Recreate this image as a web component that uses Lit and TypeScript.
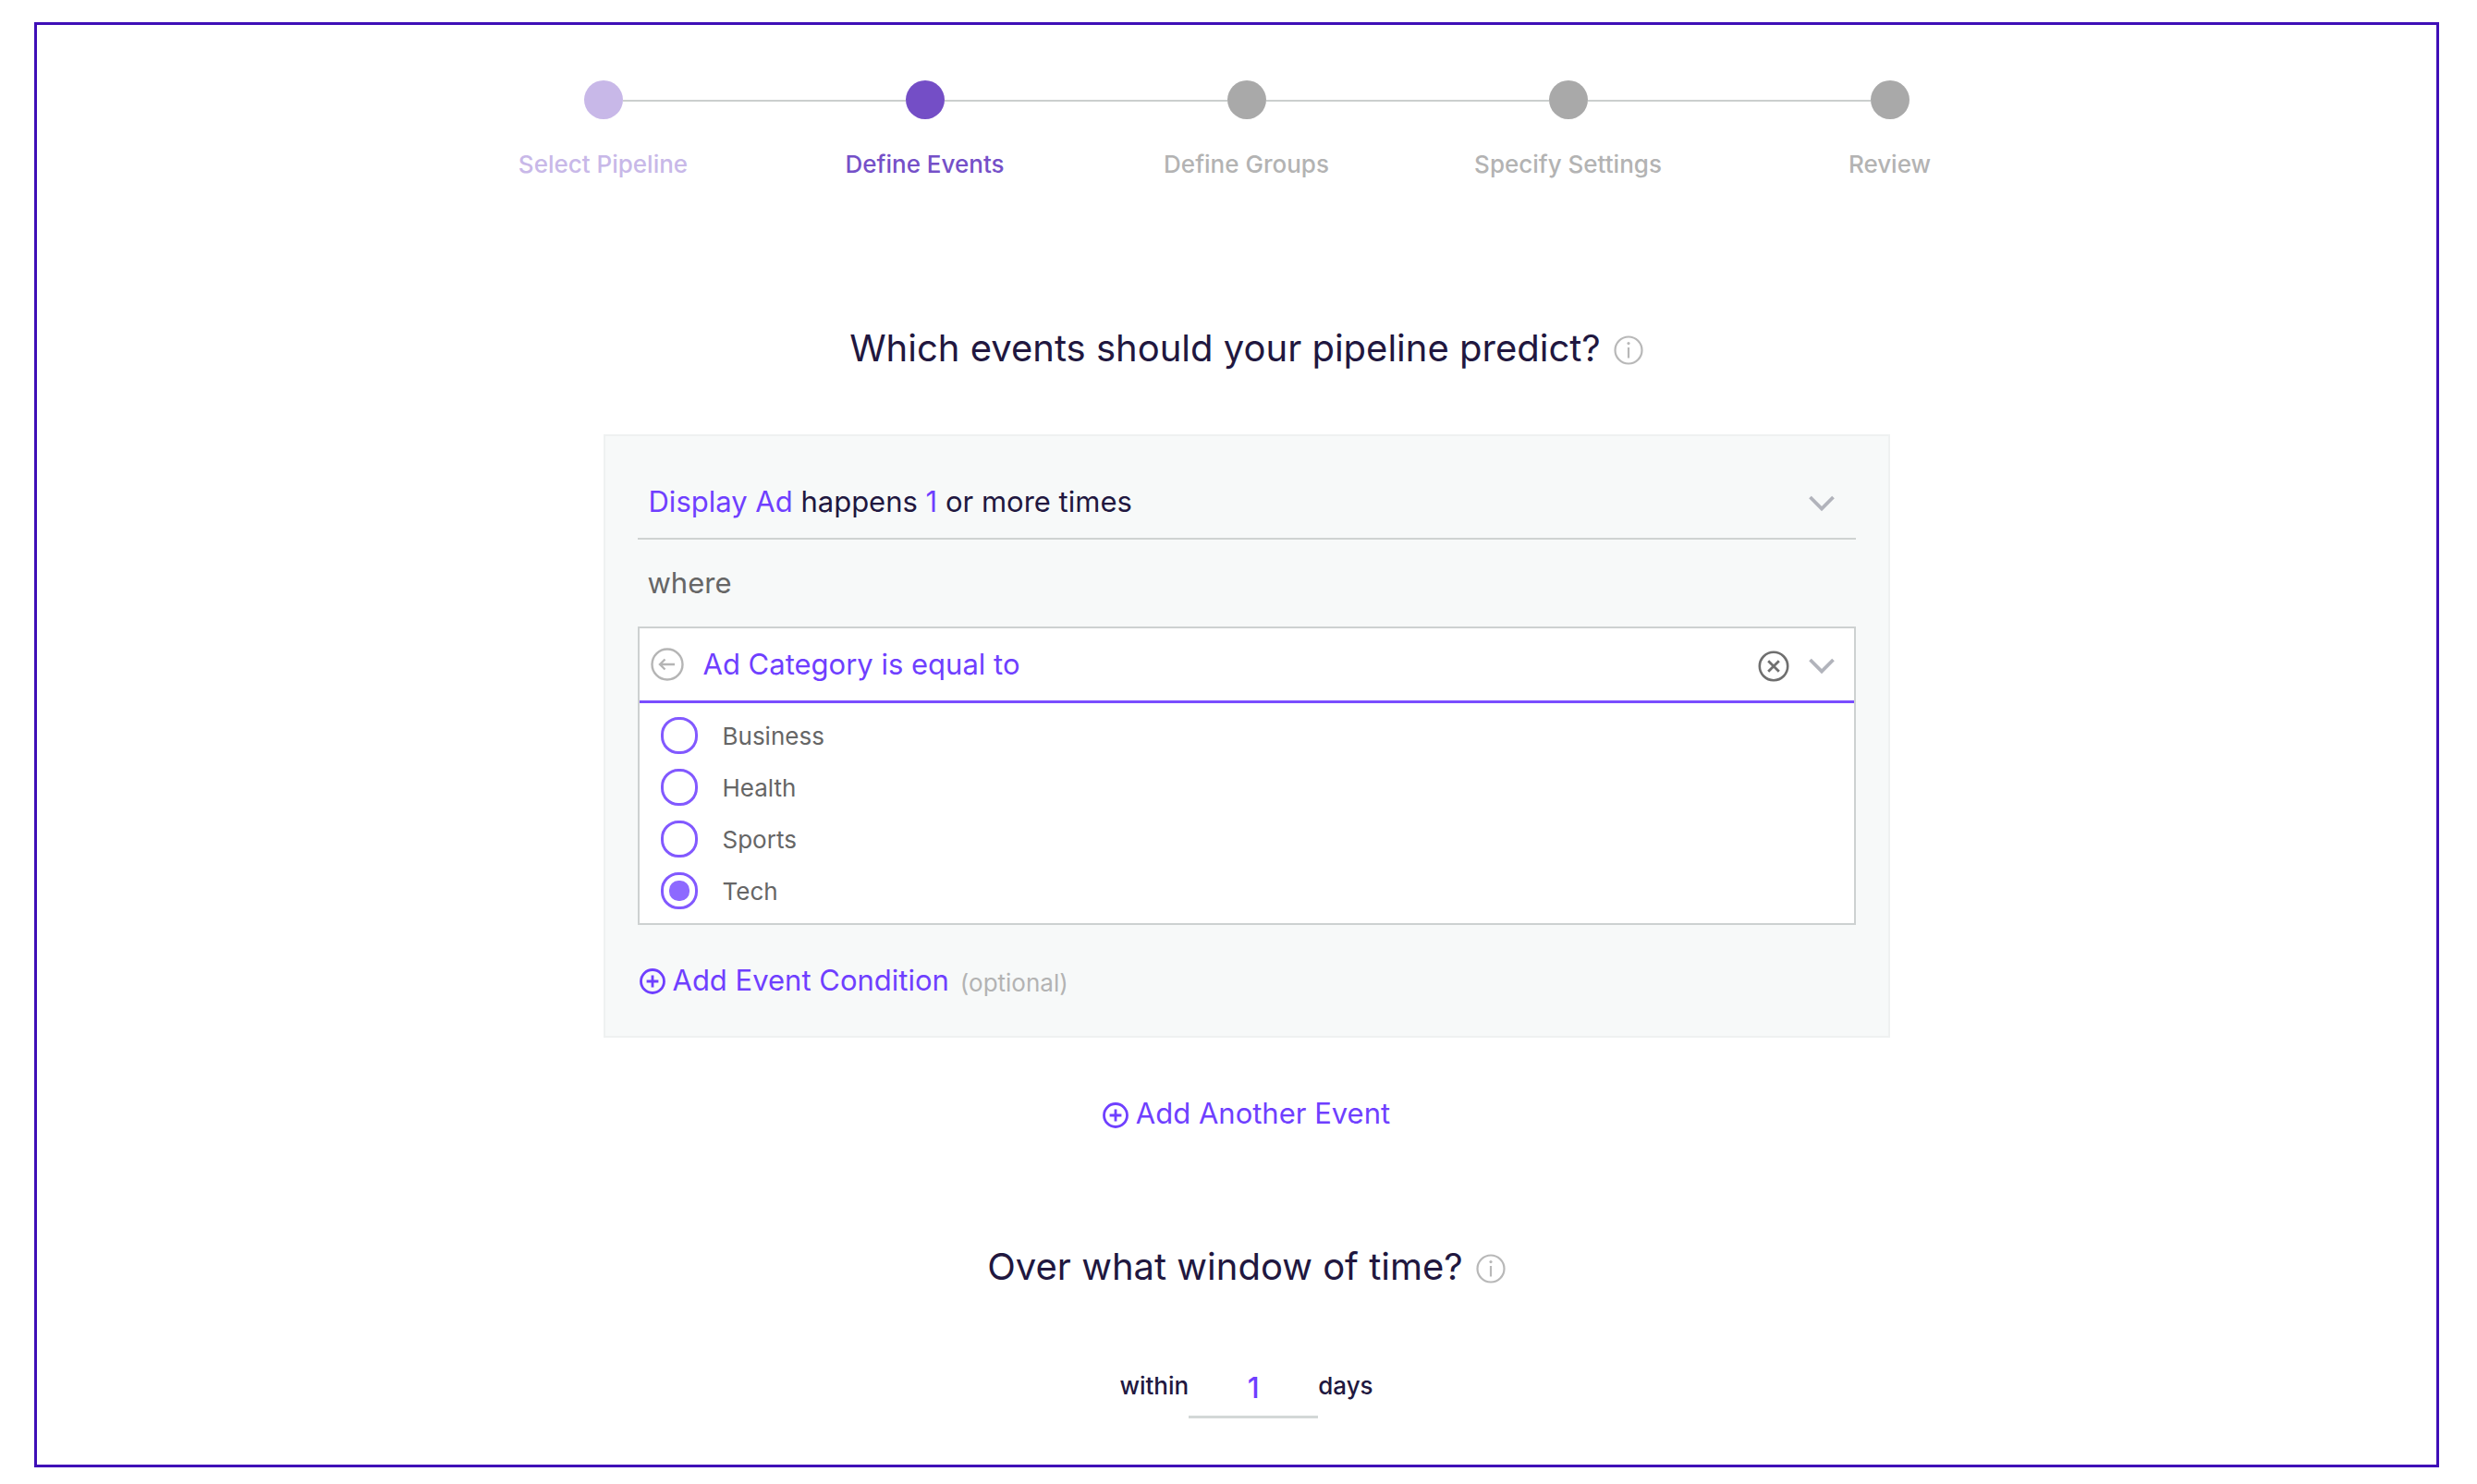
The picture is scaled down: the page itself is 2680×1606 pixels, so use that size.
import { LitElement, html, css, svg } from "lit";
import { customElement, state } from "lit/decorators.js";
import { classMap } from "lit/directives/class-map.js";

const STEPS = [
  { label: "Select Pipeline", status: "done" },
  { label: "Define Events", status: "current" },
  { label: "Define Groups", status: "upcoming" },
  { label: "Specify Settings", status: "upcoming" },
  { label: "Review", status: "upcoming" },
];

const CATEGORIES = ["Business", "Health", "Sports", "Tech"];

const infoIcon = html`<svg class="info-icon" viewBox="0 0 32 32" aria-hidden="true">
  ${svg`<circle cx="16" cy="16" r="14.5" fill="none" stroke="currentColor" stroke-width="2.2"/>
  <path d="M16 13V24.5" fill="none" stroke="currentColor" stroke-width="2.2"/>
  <circle cx="16" cy="8.6" r="1.6" fill="currentColor"/>`}
</svg>`;

const chevronIcon = html`<svg class="chevron-icon" viewBox="0 0 28 28" aria-hidden="true">
  ${svg`<path d="M1.5 9L14 21.5L26.5 9" fill="none" stroke="currentColor" stroke-width="3.8"/>`}
</svg>`;

const backIcon = html`<svg class="back-icon" viewBox="0 0 36 36" aria-hidden="true">
  ${svg`<circle cx="18" cy="18" r="16.5" fill="none" stroke="currentColor" stroke-width="2.4"/>
  <path d="M26 18H10.5M15.5 12.5L10 18L15.5 23.5" fill="none" stroke="currentColor" stroke-width="2.4"/>`}
</svg>`;

const clearIcon = html`<svg class="clear-icon" viewBox="0 0 34 34" aria-hidden="true">
  ${svg`<circle cx="17" cy="17" r="15.2" fill="none" stroke="currentColor" stroke-width="2.6"/>
  <path d="M11.2 11.2L22.8 22.8M22.8 11.2L11.2 22.8" fill="none" stroke="currentColor" stroke-width="2.8"/>`}
</svg>`;

const plusIcon = html`<svg class="plus-icon" viewBox="0 0 28 28" aria-hidden="true">
  ${svg`<circle cx="14" cy="14" r="12.5" fill="none" stroke="currentColor" stroke-width="2.8"/>
  <path d="M14 7.6V20.4M7.6 14H20.4" fill="none" stroke="currentColor" stroke-width="2.8"/>`}
</svg>`;

@customElement("app-root")
export class AppRoot extends LitElement {
  @state() private category = "Tech";

  static styles = css`
    :host {
      display: block;
      box-sizing: border-box;
      min-height: 100vh;
      padding: 24px 41px 18px 37px;
      background: #fff;
      color: #21173f;
      font-family: Inter, "Liberation Sans", sans-serif;
      font-size: 31px;
      font-weight: 420;
      line-height: 38px;
    }
    * {
      box-sizing: border-box;
    }
    button,
    input {
      margin: 0;
      padding: 0;
      border: 0;
      background: none;
      color: inherit;
      font: inherit;
    }
    button {
      display: inline-flex;
      align-items: center;
      cursor: pointer;
    }
    svg {
      display: block;
      flex: none;
    }
    .frame {
      display: flex;
      flex-direction: column;
      align-items: center;
      padding: 60px 0 50px 21px;
      border: 3px solid #3f0fb7;
    }
    .steps {
      display: grid;
      grid-template-columns: repeat(5, 1fr);
      width: 100%;
      max-width: 1740px;
      margin: 0 0 159px;
      padding: 0;
      list-style: none;
    }
    .step {
      display: flex;
      flex-direction: column;
      gap: 33px;
      text-align: center;
      font-size: 26px;
      font-weight: 450;
      line-height: 32px;
      color: #b3b3b3;
    }
    .marker {
      display: flex;
      align-items: center;
    }
    .marker::before,
    .marker::after {
      content: "";
      flex: 1;
      height: 2px;
      margin-top: 2px;
      background: #cbcfce;
    }
    .step:first-child .marker::before,
    .step:last-child .marker::after {
      background: none;
    }
    .dot {
      width: 42px;
      height: 42px;
      border-radius: 50%;
      background: #a9a9a9;
    }
    .done {
      color: #c8b8e8;
    }
    .done .dot {
      background: #c8b8e8;
    }
    .current {
      color: #7550c8;
    }
    .current .dot {
      background: #744ec6;
    }
    .question {
      display: flex;
      align-items: center;
      gap: 14px;
    }
    h2 {
      margin: 0;
      font-size: 40px;
      line-height: 48px;
      font-weight: inherit;
    }
    .info {
      padding-top: 4px;
      color: #b8b8b8;
    }
    .info-icon {
      width: 32px;
      height: 32px;
    }
    .panel {
      width: 100%;
      max-width: 1392px;
      margin: 69px 0 63px;
      padding: 32px 35px 41px;
      border: 2px solid #eff1f1;
      background: #f7f9f9;
    }
    .event {
      justify-content: space-between;
      width: 100%;
      padding: 20px 23px 20px 12px;
      border-bottom: 2px solid #cfd3d2;
      text-align: left;
    }
    .accent {
      color: #6f3fff;
    }
    .chevron-icon {
      width: 28px;
      height: 28px;
      color: #b1b3bb;
    }
    .where {
      margin: 28px 0;
      padding-left: 11px;
      color: #666;
    }
    .condition {
      margin: 0 0 40px;
      border: 2px solid #cdd1d1;
      background: #fff;
    }
    .condition-head {
      display: flex;
      align-items: center;
      gap: 21px;
      padding: 20px 21px 20px 12px;
      border-bottom: 3px solid #7a4dff;
    }
    .condition-text {
      flex: 1;
      color: #6f3fff;
    }
    .back {
      color: #b5b5b5;
    }
    .back-icon {
      width: 36px;
      height: 36px;
    }
    .clear {
      padding-top: 4px;
      color: #6f6f6f;
    }
    .clear-icon {
      width: 34px;
      height: 34px;
    }
    .options {
      display: flex;
      flex-direction: column;
      min-width: 0;
      margin: 0;
      padding: 7px 23px;
      border: 0;
    }
    .option {
      display: flex;
      align-items: center;
      gap: 27px;
      height: 56px;
      font-size: 26px;
      line-height: 32px;
      color: #666;
      cursor: pointer;
    }
    .option span {
      padding-top: 2px;
    }
    .radio {
      appearance: none;
      display: grid;
      place-content: center;
      width: 40px;
      height: 40px;
      border: 3px solid #8259ff;
      border-radius: 19px;
      cursor: pointer;
    }
    .radio:checked::before {
      content: "";
      width: 22px;
      height: 22px;
      border-radius: 10px;
      background: #8d69ff;
    }
    .add-row {
      display: flex;
      align-items: center;
      gap: 12px;
      padding-left: 2px;
    }
    .add {
      gap: 8px;
      color: #6f3fff;
    }
    .plus-icon {
      width: 28px;
      height: 28px;
      margin-top: 3px;
    }
    .optional {
      padding-top: 7px;
      font-size: 26px;
      line-height: 32px;
      color: #b3b3b3;
    }
    .window-title {
      margin: 123px 0 76px;
    }
    .window {
      display: flex;
      align-items: center;
      font-size: 26px;
      font-weight: 450;
      line-height: 32px;
    }
    .window label,
    .window span {
      padding-bottom: 6px;
    }
    .days {
      width: 140px;
      height: 64px;
      border-bottom: 3px solid #d3d8d7;
      font-size: 31px;
      text-align: center;
      color: #6f3fff;
    }
  `;

  render() {
    return html`
      <main class="frame">
        <ol class="steps">
          ${STEPS.map(
            (step) => html`<li
              class=${classMap({ step: true, [step.status]: true })}
              aria-current=${step.status === "current" ? "step" : "false"}
            >
              <div class="marker"><div class="dot"></div></div>
              <div>${step.label}</div>
            </li>`
          )}
        </ol>

        <div class="question">
          <h2>Which events should your pipeline predict?</h2>
          <button class="info" type="button" aria-label="About events">${infoIcon}</button>
        </div>

        <section class="panel">
          <button class="event" type="button">
            <span
              ><span class="accent">Display Ad</span> happens <span class="accent">1</span> or more
              times</span
            >
            ${chevronIcon}
          </button>
          <p class="where">where</p>
          <div class="condition">
            <div class="condition-head">
              <button class="back" type="button" aria-label="Back">${backIcon}</button>
              <div class="condition-text">Ad Category is equal to</div>
              <button class="clear" type="button" aria-label="Clear">${clearIcon}</button>
              <button type="button" aria-label="Toggle options">${chevronIcon}</button>
            </div>
            <fieldset class="options" aria-label="Ad Category">
              ${CATEGORIES.map(
                (name) => html`<label class="option">
                  <input
                    class="radio"
                    type="radio"
                    name="category"
                    .value=${name}
                    .checked=${this.category === name}
                    @change=${() => (this.category = name)}
                  />
                  <span>${name}</span>
                </label>`
              )}
            </fieldset>
          </div>
          <div class="add-row">
            <button class="add" type="button">${plusIcon}<span>Add Event Condition</span></button>
            <span class="optional">(optional)</span>
          </div>
        </section>

        <button class="add" type="button">${plusIcon}<span>Add Another Event</span></button>

        <div class="question window-title">
          <h2>Over what window of time?</h2>
          <button class="info" type="button" aria-label="About the time window">${infoIcon}</button>
        </div>

        <div class="window">
          <label for="days">within</label>
          <input class="days" id="days" type="text" inputmode="numeric" value="1" />
          <span>days</span>
        </div>
      </main>
    `;
  }
}
